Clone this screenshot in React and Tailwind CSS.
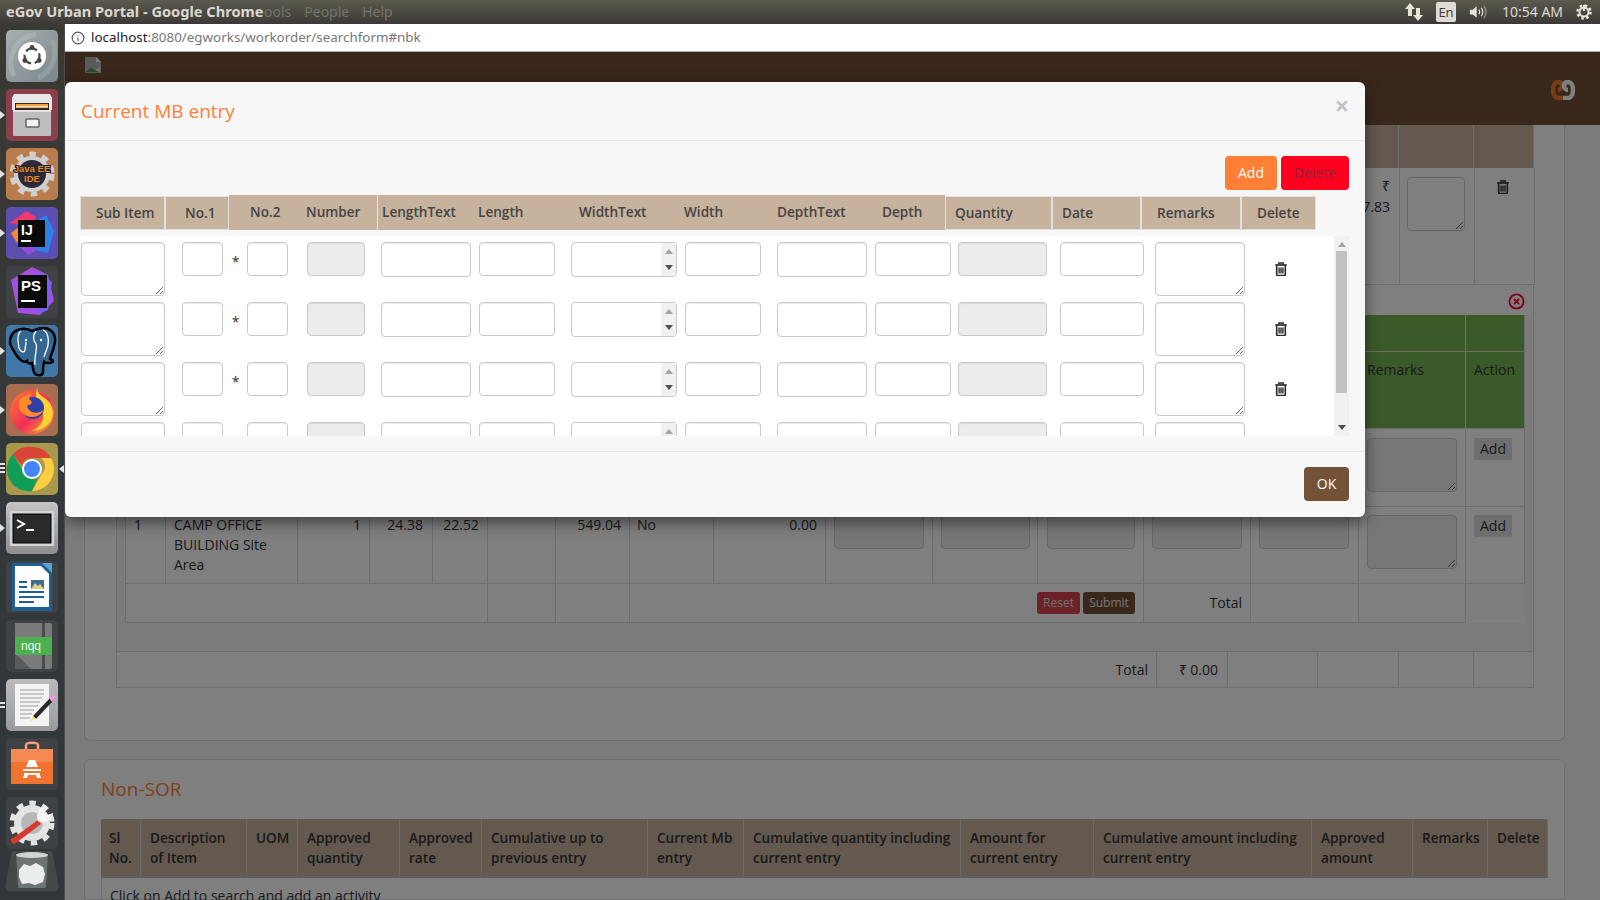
import React from "react";
import { Info, CircleX } from "lucide-react";

function Trash({ className = "" }) {
  return (
    <svg viewBox="0 0 12 14" className={"w-[12px] h-[14px] " + className} fill="none" stroke="currentColor">
      <path d="M0.300 3h11.400" strokeWidth="1.700" />
      <path d="M3.800 2.500V1h4.400v1.500" strokeWidth="1.400" />
      <path d="M1.700 3.500v9.200c0 .5.3.8.8.8h7c.5 0 .8-.3.8-.8V3.500" strokeWidth="1.600" />
      <path d="M4.100 5.500v6M6 5.500v6M7.900 5.500v6" strokeWidth="1.400" />
    </svg>
  );
}

function Tri({ dir = "up", dark }) {
  return (
    <svg viewBox="0 0 8 5" className="w-[8px] h-[5px]" fill={dark ? "#505050" : "#a3a3a3"}>
      {dir === "up" ? <path d="M4 0l4 5H0z" /> : <path d="M4 5L0 0h8z" />}
    </svg>
  );
}

const fieldCls = "block border border-[#c9c9c9] rounded-[4px] bg-white shadow-[inset_0_1px_1px_rgba(0,0,0,0.075)]";
const grayCls = "block border border-[#c9c9c9] rounded-[4px] bg-[#ececec] shadow-[inset_0_1px_1px_rgba(0,0,0,0.075)]";

function ModalRow({ star = true }) {
  return (
    <div className="flex items-start h-[60px] pt-[6px] shrink-0">
      <textarea className={fieldCls + " w-[84px] h-[54px]"} />
      <input className={fieldCls + " ml-[17px] w-[41px] h-[34px]"} />
      <span className="w-[24px] pt-[10px] pl-[1px] text-center text-[14px] leading-[20px] text-[#333]">{star ? "*" : ""}</span>
      <input className={fieldCls + " w-[41px] h-[34px]"} />
      <input disabled className={grayCls + " ml-[19px] w-[58px] h-[34px]"} />
      <input className={fieldCls + " ml-[16px] w-[90px] h-[35px]"} />
      <input className={fieldCls + " ml-[8px] w-[76px] h-[34px]"} />
      <div className="ml-[16px] w-[106px] h-[35px] flex border border-[#c9c9c9] rounded-[4px] overflow-hidden bg-white">
        <div className="flex-1" />
        <div className="w-[15px] bg-[#f0f0f0] flex flex-col items-center justify-between py-[6px]">
          <Tri dir="up" />
          <Tri dir="down" dark />
        </div>
      </div>
      <input className={fieldCls + " ml-[8px] w-[76px] h-[34px]"} />
      <input className={fieldCls + " ml-[16px] w-[90px] h-[35px]"} />
      <input className={fieldCls + " ml-[8px] w-[76px] h-[34px]"} />
      <input disabled className={grayCls + " ml-[7px] w-[89px] h-[34px]"} />
      <input className={fieldCls + " ml-[13px] w-[84px] h-[34px]"} />
      <textarea className={fieldCls + " ml-[11px] w-[90px] h-[54px]"} />
      <div className="ml-[30px] pt-[20px] text-[#2a2a2a]">
        <Trash />
      </div>
    </div>
  );
}

const boxed = "h-[34px] border border-[#e4e0dc]";
const flat = "h-[35px] -mt-[1px] pb-[1px]";
const headCells = [
  { t: "Sub Item", c: "w-[85px] pl-[15px] " + boxed },
  { t: "No.1", c: "w-[64px] pl-[19px] " + boxed },
  { t: "No.2", c: "w-[71px] pl-[21px] " + flat },
  { t: "Number", c: "w-[77px] pl-[6px] " + flat },
  { t: "LengthText", c: "w-[101px] pl-[4px] border-l border-[#e4e0dc] " + flat },
  { t: "Length", c: "w-[100px] pl-[0px] " + flat },
  { t: "WidthText", c: "w-[105px] pl-[1px] " + flat },
  { t: "Width", c: "w-[93px] pl-[1px] " + flat },
  { t: "DepthText", c: "w-[105px] pl-[1px] " + flat },
  { t: "Depth", c: "w-[64px] pl-[1px] " + flat },
  { t: "Quantity", c: "w-[107px] pl-[9px] " + boxed },
  { t: "Date", c: "w-[89px] pl-[9px] " + boxed },
  { t: "Remarks", c: "w-[100px] pl-[15px] " + boxed },
  { t: "Delete", c: "w-[75px] pl-[15px] " + boxed },
];

function Modal() {
  return (
    <div className="absolute left-0 top-[30px] w-[1300px] h-[435px] bg-[#f7f7f7] rounded-[6px] shadow-[0_5px_15px_rgba(0,0,0,0.5)] flex flex-col">
      <div className="h-[59px] shrink-0 border-b border-[#e5e5e5] px-[16px] flex items-start justify-between">
        <span className="text-[19px] leading-[26px] mt-[16px] text-[#ff7f37]">Current MB entry</span>
        <span className="text-[25px] leading-[25px] mt-[11px] font-bold text-[#c4c4c4]">×</span>
      </div>
      <div className="h-[311px] shrink-0 border-b border-[#e5e5e5] px-[16px] pt-[15px]">
        <div className="flex justify-end gap-[4px] h-[34px]">
          <button className="w-[52px] pb-[2px] rounded-[4px] bg-[#ff7f36] text-white text-[14px]">Add</button>
          <button className="w-[68px] pb-[2px] rounded-[4px] bg-[#ff001f] text-[#8f2238] text-[14px]">Delete</button>
        </div>
        <div className="flex h-[33px] mt-[6px] -ml-px">
          {headCells.map((h) => (
            <div key={h.t} className={"flex items-center bg-[#c7b29e] text-[13.6px] font-semibold text-[#444] " + h.c}>
              <span>{h.t}</span>
            </div>
          ))}
        </div>
        <div className="mt-[7px] h-[200px] bg-white flex overflow-hidden">
          <div className="flex-1 flex flex-col">
            <ModalRow />
            <ModalRow />
            <ModalRow />
            <ModalRow star={false} />
          </div>
          <div className="w-[15px] h-full bg-[#f1f1f1] flex flex-col items-center pt-[6px] pb-[6px]">
            <Tri dir="up" />
            <div className="w-[11px] h-[142px] mt-[4px] bg-[#c1c1c1]" />
            <div className="flex-1" />
            <Tri dir="down" dark />
          </div>
        </div>
      </div>
      <div className="flex-1 flex justify-end items-start px-[16px] pt-[15px]">
        <button className="w-[45px] h-[34px] pb-[2px] rounded-[4px] bg-[#745238] text-white text-[14px]">OK</button>
      </div>
    </div>
  );
}

const innerCols = "grid grid-cols-[41px_132px_72px_63px_55px_68px_74px_84px_112px_107px_105px_106px_107px_108px_107px_59px]";
const cell = "border-r border-b border-[#dadada] px-[8px] py-[8px] text-[14px] leading-[20px] text-[#333]";
const bgInput = "block w-[90px] h-[34px] border border-[#cfcfcf] rounded-[4px] bg-[#eeeeee]";
const bgArea = "block w-[90px] h-[54px] border border-[#cfcfcf] rounded-[4px] bg-[#eeeeee]";

function AddBtn() {
  return (
    <div className="w-[38px] h-[22px] bg-[#dddddd] text-[#333] text-[14px] leading-[22px] text-center">Add</div>
  );
}

function BackgroundPage() {
  const rows = [
    ["", "", "", "", "", "", "", ""],
    ["1", "CAMP OFFICE BUILDING Site Area", "1", "24.38", "22.52", "", "549.04", "No"],
  ];
  return (
    <div className="w-[1535px] text-[14px] text-[#333]">
      <div className="ml-[19px] w-[1481px] h-[616px] bg-white border-x border-b border-[#dddddd] rounded-b-[6px] pl-[31px]">
        <div className="w-[1418px]">
          <div className="grid grid-cols-[1283px_75px_60px] h-[43px] bg-[#c7b29e]">
            <div className="border-r border-[#dadada]" />
            <div className="border-r border-[#dadada]" />
            <div className="border-r border-[#dadada]" />
          </div>
          <div className="grid grid-cols-[1283px_75px_60px] h-[117px] border-l border-[#dadada]">
            <div className="border-r border-b border-[#dadada] pt-[8px] pr-[9px] text-right leading-[20px]">
              <div>₹</div>
              <div className="pt-[1px]">7.83</div>
            </div>
            <div className="border-r border-b border-[#dadada] pl-[7px] pt-[9px]">
              <textarea className="block w-[58px] h-[54px] border border-[#cfcfcf] rounded-[4px] bg-white" />
            </div>
            <div className="border-r border-b border-[#dadada] pt-[12px] pr-[3px] flex justify-center items-start text-[#333]">
              <Trash />
            </div>
          </div>
          <div className="h-[367px] bg-[#f6f6f6] border-x border-b border-[#dadada] pl-[8px]">
            <div className="h-[30px] pt-[2px] bg-white -ml-[8px] pr-[8px] flex justify-end items-center">
              <CircleX size={17} strokeWidth={2.6} className="text-[#ff0033]" />
            </div>
            <div className="bg-white w-[1400px] h-[307px]">
              <div className={innerCols + " h-[37px] bg-[#76b454]"}>
                {Array.from({ length: 16 }).map((_, i) => (
                  <div key={i} className="border-r border-b border-[#dadada]" />
                ))}
              </div>
              <div className={innerCols + " h-[77px] bg-[#76b454]"}>
                {Array.from({ length: 14 }).map((_, i) => (
                  <div key={i} className={cell} />
                ))}
                <div className={cell}>Remarks</div>
                <div className={cell}>Action</div>
              </div>
              {rows.map((r, i) => (
                <div key={i} className={innerCols + (i === 0 ? " h-[78px]" : " h-[77px]")}>
                  <div className={cell + " border-l"}>{r[0]}</div>
                  <div className={cell}>{r[1]}</div>
                  <div className={cell + " text-right"}>{r[2]}</div>
                  <div className={cell + " text-right !pr-[9px]"}>{r[3]}</div>
                  <div className={cell + " text-right"}>{r[4]}</div>
                  <div className={cell}>{r[5]}</div>
                  <div className={cell + " text-right"}>{r[6]}</div>
                  <div className={cell + " !pl-[7px]"}>{r[7]}</div>
                  <div className={cell + " text-right"}>{i === 1 ? "0.00" : ""}</div>
                  <div className={cell}><div className={bgInput} /></div>
                  <div className={cell}><div className={bgInput + " !w-[89px]"} /></div>
                  <div className={cell + " !pl-[9px]"}><div className={bgInput + " !w-[88px]"} /></div>
                  <div className={cell}><div className={bgInput} /></div>
                  <div className={cell}><div className={bgInput} /></div>
                  <div className={cell + (i === 0 ? " !pt-[9px]" : "")}><textarea className={bgArea} /></div>
                  <div className={cell + " !pr-0" + (i === 0 ? " !pt-[9px]" : "")}><AddBtn /></div>
                </div>
              ))}
              <div className={innerCols + " h-[39px]"}>
                <div className="col-span-5 border-l border-r border-b border-[#dadada]" />
                <div className="border-r border-b border-[#dadada]" />
                <div className="border-r border-b border-[#dadada]" />
                <div className="col-span-5 border-r border-b border-[#dadada] flex justify-end items-center gap-[3px] pr-[8px]">
                  <div className="w-[43px] h-[22px] rounded-[3px] bg-[#d9434f] text-[#e0e0e0] text-[12px] leading-[22px] text-center">Reset</div>
                  <div className="w-[52px] h-[22px] rounded-[3px] bg-[#744e36] text-[#e8e8e8] text-[12px] leading-[22px] text-center">Submit</div>
                </div>
                <div className="border-r border-b border-[#dadada] flex items-center justify-end pr-[8px] pb-[2px]">Total</div>
                <div className="border-r border-b border-[#dadada]" />
                <div className="border-r border-b border-[#dadada]" />
                <div className="bg-[#fdfdfd]" />
              </div>
            </div>
          </div>
          <div className="grid grid-cols-[1040px_71px_90px_81px_75px_60px] h-[36px] border-l border-[#dadada]">
            <div className="border-r border-b border-[#dadada] flex items-center justify-end pr-[8px]">Total</div>
            <div className="border-r border-b border-[#dadada] flex items-center justify-end pr-[9px]">₹ 0.00</div>
            <div className="border-r border-b border-[#dadada]" />
            <div className="border-r border-b border-[#dadada]" />
            <div className="border-r border-b border-[#dadada]" />
            <div className="border-r border-b border-[#dadada]" />
          </div>
        </div>
      </div>
      <div className="mt-[18px] ml-[19px] w-[1481px] h-[141px] bg-white border border-[#dddddd] rounded-t-[6px] pl-[16px]">
        <div className="pt-[16px] text-[19px] leading-[26px] text-[#ff7f37]">Non-SOR</div>
        <div className="mt-[17px] grid grid-cols-[40px_106px_51px_102px_82px_166px_96px_217px_133px_218px_101px_75px_60px] w-[1447px] h-[59px] bg-[#c7b29e] border-b-[2px] border-[#bdbdbd] text-[13.6px] font-semibold text-[#333] leading-[20px]">
          {[
            ["Sl", "No."],
            ["Description", "of Item"],
            ["UOM"],
            ["Approved", "quantity"],
            ["Approved", "rate"],
            ["Cumulative up to", "previous entry"],
            ["Current Mb", "entry"],
            ["Cumulative quantity including", "current entry"],
            ["Amount for", "current entry"],
            ["Cumulative amount including", "current entry"],
            ["Approved", "amount"],
            ["Remarks"],
            ["Delete"],
          ].map((t, i) => (
            <div key={i} className={"border-r border-[#d8d0c8] pr-[2px] pt-[9px] " + (i === 0 ? "pl-[8px]" : "pl-[9px]")}>
              {t.map((l) => (
                <div key={l} className="whitespace-nowrap">{l}</div>
              ))}
            </div>
          ))}
        </div>
        <div className="pl-[8px] pt-[8px] leading-[20px] border-l border-[#dadada] w-[1447px]">Click on Add to search and add an activity</div>
      </div>
    </div>
  );
}

/* ---------- dock ---------- */

function Gear({ cx = 26, cy = 26, r = 17, fill = "#d8d8d8" }) {
  return (
    <g>
      <circle cx={cx} cy={cy} r={r} fill={fill} />
      <circle cx={cx} cy={cy} r={r + 2} fill="none" stroke={fill} strokeWidth="5" strokeDasharray="6.500 6.500" />
    </g>
  );
}

const I = {
  ubuntu: (
    <svg viewBox="0 0 52 52" className="w-full h-full">
      <path d="M8 46C0 30 8 8 30 4" stroke="#b5bebe" strokeWidth="5" fill="none" opacity=".5" />
      <path d="M46 10c6 14 2 30-14 38" stroke="#a5aeae" strokeWidth="5" fill="none" opacity=".5" />
      <circle cx="26" cy="26" r="14" fill="#fff" />
      <circle cx="26" cy="26" r="7.500" fill="none" stroke="#444" strokeWidth="2.200" strokeDasharray="12 3.700" strokeDashoffset="3" />
      <circle cx="26" cy="17.500" r="2.400" fill="#444" />
      <circle cx="18.800" cy="30.500" r="2.400" fill="#444" />
      <circle cx="33.200" cy="30.500" r="2.400" fill="#444" />
    </svg>
  ),
  files: (
    <svg viewBox="0 0 52 52" className="w-full h-full">
      <path d="M8 5h36l2 4v12H6V9z" fill="#e8e8e8" />
      <rect x="9" y="14" width="34" height="8" fill="#3a2a22" />
      <rect x="10" y="15" width="32" height="4" fill="#f2a04a" />
      <rect x="10" y="17" width="32" height="1.200" fill="#ffe9c8" />
      <path d="M7 21h38v25a1 1 0 0 1-1 1H8a1 1 0 0 1-1-1z" fill="#bdbdbd" />
      <rect x="7" y="21" width="38" height="2" fill="#e4e4e4" />
      <rect x="20" y="30" width="13" height="8" rx="1" fill="#f2f2f2" stroke="#666" strokeWidth="1.500" />
    </svg>
  ),
  eclipse: (
    <svg viewBox="0 0 52 52" className="w-full h-full">
      <Gear r={18} fill="#cfcfcf" />
      <circle cx="26" cy="26" r="14" fill="#2f2a3a" />
      <g fontSize="9.500" fontWeight="700" textAnchor="middle" fill="#e08a1e" stroke="#2a2030" strokeWidth="2" paintOrder="stroke" fontFamily="Liberation Sans, sans-serif">
        <text x="26" y="24">Java EE</text>
        <text x="26" y="34">IDE</text>
      </g>
    </svg>
  ),
  ij: (
    <svg viewBox="0 0 52 52" className="w-full h-full">
      <path d="M4 16L20 4l10 6-6 10z" fill="#f0386b" />
      <path d="M5 26l8-6 4 14-6 2z" fill="#fb8a2d" />
      <path d="M30 14l10-6 8 16-6 22-18-4z" fill="#2f7fe8" />
      <path d="M8 34l14 14 10-6z" fill="#8f4fd8" />
      <rect x="12" y="13" width="27" height="27" fill="#0a0a0a" />
      <text x="15" y="28" fontSize="14" fontWeight="700" fill="#fff" fontFamily="Liberation Sans, sans-serif">IJ</text>
      <rect x="15" y="33" width="10" height="2" fill="#fff" />
    </svg>
  ),
  ps: (
    <svg viewBox="0 0 52 52" className="w-full h-full">
      <path d="M5 14L26 1l16 8 6 26-14 14-22-2z" fill="#a54fe0" />
      <path d="M34 6l12 10-4 28-10 4z" fill="#7a5cf0" />
      <rect x="12" y="9" width="29" height="33" fill="#0a0a0a" />
      <text x="15" y="25" fontSize="15" fontWeight="700" fill="#fff" fontFamily="Liberation Sans, sans-serif">PS</text>
      <rect x="15" y="34" width="14" height="2" fill="#fff" />
    </svg>
  ),
  pg: (
    <svg viewBox="0 0 52 52" className="w-full h-full">
      <path d="M4 17C4 7 12 3 20 4c3 0 5 2 6 2 3-1 6-3 11-3 8 0 13 6 12 14-1 7-3 11-5 16-1 2 3 1 3 3s-7 3-9 1c-1 4-1 8-1 10 0 4-5 4-8 2-2-2-2-8-3-11-3 1-5 0-5-2-4 3-9-3-12-8-2-4-5-7-5-11z" fill="#336791" stroke="#000" strokeWidth="2.500" />
      <path d="M15 6c-5 3-3 12-2 17 1 3 5 6 6 2 0-4 1-4 1-8M30 6c-3 4-3 9 0 13 2 3-2 12-1 21M37 5c5 2 6 9 5 15-1 5-3 8-4 12" fill="none" stroke="#fff" strokeWidth="1.300" />
      <circle cx="20" cy="15" r="1.200" fill="#fff" />
      <circle cx="35" cy="15" r="1.200" fill="#fff" />
    </svg>
  ),
  firefox: (
    <svg viewBox="0 0 52 52" className="w-full h-full">
      <defs>
        <linearGradient id="ffx" x1="0" y1="0" x2="1" y2="1">
          <stop offset="0" stopColor="#ff7a2a" />
          <stop offset=".55" stopColor="#f0305a" />
          <stop offset="1" stopColor="#ffb52b" />
        </linearGradient>
      </defs>
      <circle cx="26" cy="28" r="22" fill="url(#ffx)" />
      <path d="M32 3c-2 6 2 8 8 12 8 6 9 18 3 24-4 5-10 8-17 8 8-4 12-10 11-17-1-9-8-13-7-20 0-3 1-5 2-7z" fill="#ffd234" />
      <circle cx="27" cy="24" r="11" fill="#2f3fa8" />
      <path d="M14 16c3-4 8-6 12-6-2 3-4 4-2 6 3 2 2 5-2 5-2 1 0 5 4 7 4 2 10 0 12-3-2 6-10 10-17 7-7-3-10-10-7-16z" fill="#ff8b2a" />
    </svg>
  ),
  chrome: (
    <svg viewBox="0 0 52 52" className="w-full h-full">
      <path d="M26 4a22 22 0 0 1 19 11H26a11 11 0 0 0-10.500 7.500L7 11A22 22 0 0 1 26 4z" fill="#db4437" />
      <path d="M45 15a22 22 0 0 1-19 33l9.500-16.500A11 11 0 0 0 35 15z" fill="#ffcd40" />
      <path d="M7 11l9.500 16.500A11 11 0 0 0 31.500 35.500L26 48A22 22 0 0 1 7 11z" fill="#0f9d58" />
      <circle cx="26" cy="26" r="10" fill="#fff" />
      <circle cx="26" cy="26" r="8" fill="#4285f4" />
    </svg>
  ),
  terminal: (
    <svg viewBox="0 0 52 52" className="w-full h-full">
      <rect x="4" y="9" width="44" height="35" fill="#d5d5d5" />
      <rect x="7" y="12" width="38" height="29" fill="#2a2a2a" stroke="#000" strokeWidth="1" />
      <path d="M11 18l7 4-7 4" fill="none" stroke="#fff" strokeWidth="2" />
      <rect x="20" y="27" width="8" height="2" fill="#fff" />
    </svg>
  ),
  writer: (
    <svg viewBox="0 0 52 52" className="w-full h-full">
      <path d="M6 2h40v46a2 2 0 0 1-2 2H8a2 2 0 0 1-2-2z" fill="#1f5f94" />
      <path d="M36 2h10v10z" fill="#5aa0d0" />
      <path d="M9 5h26l8 8v33H9z" fill="#fff" />
      <rect x="25" y="19" width="13" height="9" fill="#3a6e94" />
      <path d="M25 28l4-6 3 3 2-2 4 5z" fill="#e8d080" />
      <path d="M13 20h8v2h-8zM13 25h8v2h-8zM13 30h25v2H13zM13 35h25v2H13zM13 40h15v2H13z" fill="#1f5f94" />
    </svg>
  ),
  nqq: (
    <svg viewBox="0 0 52 52" className="w-full h-full">
      <path d="M9 3h35a2 2 0 0 1 2 2v42a2 2 0 0 1-2 2H9z" fill="#7a7a7a" />
      <rect x="36" y="3" width="3" height="46" fill="#4a4a4a" />
      <path d="M9 33l16 16H9z" fill="#5a5a5a" />
      <rect x="9" y="17" width="37" height="18" fill="#4caf50" />
      <text x="15" y="30" fontSize="12" fill="#e8f5e8" fontFamily="Liberation Sans, sans-serif">nqq</text>
    </svg>
  ),
  editor: (
    <svg viewBox="0 0 52 52" className="w-full h-full">
      <rect x="9" y="5" width="34" height="42" fill="#f4f4f4" />
      <path d="M14 11h24M14 15h24M14 19h22M14 23h20M14 27h18M14 31h14M14 35h12M14 39h10" stroke="#9a9a9a" strokeWidth="1" />
      <path d="M27 37l17-18 3 3-17 18z" fill="#2a2a2a" />
      <path d="M43 19l3-3c2-1 4 2 3 4l-3 3z" fill="#e89adf" />
      <path d="M27 37l3 3-6 2z" fill="#f0e080" />
    </svg>
  ),
  software: (
    <svg viewBox="0 0 52 52" className="w-full h-full">
      <path d="M20 12V7c0-3 12-3 12 0v5" fill="none" stroke="#f4a078" strokeWidth="2.500" />
      <path d="M5 11h42v35H5z" fill="#f0732f" />
      <path d="M5 11h42v13H5z" fill="#f58a52" />
      <path d="M23 22h6l3 7h-12z" fill="#fff" />
      <path d="M17 31h18v2H17zM18 35h16v2H18z" fill="#fff" />
      <path d="M18 37h4l-1 3h-4zM30 37h4l1 3h-4z" fill="#fff" />
    </svg>
  ),
  settings: (
    <svg viewBox="0 0 52 52" className="w-full h-full">
      <Gear r={18} fill="#e4e4e4" />
      <circle cx="26" cy="26" r="11" fill="#b8b8b8" />
      <path d="M7 41l25-18 3 4-25 19a3 3 0 0 1-4-5z" fill="#d63a2f" />
      <path d="M32 24c-3-7 1-14 9-15l-3 6 3 3 6-2c0 7-8 12-15 8z" fill="#f4f4f4" />
    </svg>
  ),
  trash: (
    <svg viewBox="0 0 54 42" className="w-full h-full">
      <path d="M7 1h40l7 36-2 4H2l-2-4z" fill="#434849" />
      <path d="M11 4h32l-2 32a2 2 0 0 1-2 2H15a2 2 0 0 1-2-2z" fill="#6e7374" />
      <ellipse cx="27" cy="5" rx="16" ry="3" fill="#cfd3d3" />
      <path d="M14 20l5-6 6 2 6-3 7 4 2 7-2 8-8 3-6-2-7 1-3-7z" fill="#eceeee" />
    </svg>
  ),
};

function Tri2({ right }) {
  return (
    <svg viewBox="0 0 5 8" className="w-[5px] h-[8px]" fill="#e2e2e2">
      {right ? <path d="M5 0v8L0 4z" /> : <path d="M0 0v8l5-4z" />}
    </svg>
  );
}

function Tile({ bg, icon, pip }) {
  return (
    <div className={"relative w-[52px] h-[52px] shrink-0 rounded-[5px] " + bg}>
      {icon}
      {pip === "tri" && (
        <span className="absolute left-[-6px] top-[22px]"><Tri2 /></span>
      )}
      {pip === "dots3" && (
        <>
          <span className="absolute left-[-6px] top-[20px] flex flex-col gap-[2px]">
            <i className="block w-[5px] h-[2px] bg-[#e2e2e2]" />
            <i className="block w-[5px] h-[2px] bg-[#e2e2e2]" />
            <i className="block w-[5px] h-[2px] bg-[#e2e2e2]" />
          </span>
          <span className="absolute right-[-6px] top-[22px]"><Tri2 right /></span>
        </>
      )}
      {pip === "dots2" && (
        <span className="absolute left-[-6px] top-[23px] flex flex-col gap-[2px]">
          <i className="block w-[5px] h-[2px] bg-[#e2e2e2]" />
          <i className="block w-[5px] h-[2px] bg-[#e2e2e2]" />
        </span>
      )}
    </div>
  );
}

function Dock() {
  return (
    <div className="w-[65px] shrink-0 bg-gradient-to-b from-[#3a3933] via-[#33383a] to-[#31363a] pt-[6px] pl-[6px] flex flex-col gap-[7px] border-r border-[#4a4d4d]">
      <Tile bg="bg-gradient-to-br from-[#a7b0b0] to-[#79878a]" icon={I.ubuntu} />
      <Tile bg="bg-[#8b3f4b]" icon={I.files} pip="tri" />
      <Tile bg="bg-[#b87c4d]" icon={I.eclipse} pip="tri" />
      <Tile bg="bg-[#5b4fb2]" icon={I.ij} pip="tri" />
      <Tile bg="bg-[#3e4244]" icon={I.ps} />
      <Tile bg="bg-[#3f78a8]" icon={I.pg} pip="tri" />
      <Tile bg="bg-[#a86c50]" icon={I.firefox} pip="tri" />
      <Tile bg="bg-[#a8994d]" icon={I.chrome} pip="dots3" />
      <Tile bg="bg-gradient-to-b from-[#c4c4c4] to-[#8f8f8f]" icon={I.terminal} pip="tri" />
      <Tile bg="bg-[#3e4244]" icon={I.writer} />
      <Tile bg="bg-[#3e4244]" icon={I.nqq} />
      <Tile bg="bg-gradient-to-b from-[#bcbcbc] to-[#9a9a9a]" icon={I.editor} pip="dots2" />
      <Tile bg="bg-[#3e4244]" icon={I.software} />
      <Tile bg="bg-[#3e4244]" icon={I.settings} />
      <div className="-mt-[6px] -ml-[1px] w-[54px] h-[42px] shrink-0">{I.trash}</div>
    </div>
  );
}

function TopBar() {
  return (
    <div className="h-[24px] shrink-0 bg-gradient-to-b from-[#5c5a4e] to-[#3c3b37] flex items-center justify-between border-b border-[#3a3935] text-[14px]">
      <div className="flex items-center pl-[6px] font-['Noto_Sans',sans-serif]">
        <span className="font-bold text-[14.6px] text-[#dcd8cf] w-[258px] whitespace-nowrap">eGov Urban Portal - Google Chrome</span>
        <span className="text-[#75736a]">ools</span>
        <span className="text-[#75736a] ml-[13px]">People</span>
        <span className="text-[#75736a] ml-[13px]">Help</span>
      </div>
      <div className="flex items-center pr-[8px] text-[#dfdbd2]">
        <svg viewBox="0 0 18 18" className="w-[18px] h-[18px]" fill="#e8e4da">
          <path d="M5 0l5 6H7v7H3V6H0z" />
          <path d="M13 18l-5-6h3V5h4v7h3z" />
        </svg>
        <div className="ml-[13px] w-[20px] h-[20px] rounded-[2px] bg-[#e0dcd4] text-[#3c3b37] text-[13px] leading-[20px] text-center">En</div>
        <svg viewBox="0 0 20 18" className="ml-[13px] w-[19px] h-[18px]" fill="none" stroke="#e8e4da">
          <path d="M1 6.500h3L8 3v12l-4-3.500H1z" fill="#e8e4da" stroke="none" />
          <path d="M10.500 6.500c1 1.500 1 3.500 0 5" strokeWidth="1.300" />
          <path d="M13 4.500c2 3 2 6 0 9" strokeWidth="1.300" />
          <path d="M15.500 2.500c3 4 3 9 0 13" strokeWidth="1.300" opacity=".5" />
        </svg>
        <span className="ml-[14px] w-[61px] whitespace-nowrap font-['Noto_Sans',sans-serif]">10:54 AM</span>
        <svg viewBox="0 0 16 18" className="ml-[13px] w-[16px] h-[18px]" fill="none" stroke="#e8e4da">
          <circle cx="8" cy="9" r="4.500" strokeWidth="2" />
          <circle cx="8" cy="9" r="6.500" strokeWidth="2.500" strokeDasharray="2.500 2.600" />
          <path d="M8 2v6" strokeWidth="2" />
        </svg>
      </div>
    </div>
  );
}

export default function App() {
  return (
    <div className="w-[1600px] h-[900px] overflow-hidden flex flex-col font-['Open_Sans',sans-serif]">
      <TopBar />
      <div className="flex flex-1 min-h-0">
        <Dock />
        <div className="flex-1 flex flex-col min-w-0">
          <div className="h-[28px] shrink-0 bg-white border-b border-[#b0b0b0] flex items-center pl-[6px] text-[13.4px] font-['Noto_Sans',sans-serif]">
            <Info size={14} className="text-[#555]" />
            <span className="ml-[6px] text-[#222]">localhost</span>
            <span className="text-[#777]">:8080/egworks/workorder/searchform#nbk</span>
          </div>
          <div className="relative flex-1 overflow-hidden bg-[#f6f6f6]">
            <div className="h-[73px] bg-[#744e36] flex items-center justify-between pl-[20px] pr-[25px]">
              <svg viewBox="0 0 16 16" className="w-[16px] h-[16px] self-start mt-[5px]">
                <path d="M0 0h11l5 5v11H0z" fill="#b4b4b4" />
                <path d="M11 0l5 5h-5z" fill="#ffffff" />
                <path d="M1 15l5-4 4 2 5 2z" fill="#4a9a3a" />
                <path d="M10 13l5-3v5z" fill="#ffffff" opacity=".7" />
              </svg>
              <svg viewBox="0 0 24 20" className="w-[24px] h-[20px] mt-[3px]" fill="none" strokeWidth="4.500">
                <path d="M12 18H7c-3 0-5-3-5-8s2-8 5-8 4 2 4 4-2 4-4 4" stroke="#f07a2a" />
                <path d="M12 18h5c3 0 5-3 5-8s-2-8-5-8-4 2-4 4 2 4 4 4" stroke="#ffffff" />
              </svg>
            </div>
            <BackgroundPage />
            <div className="absolute inset-0 bg-black/50" />
            <Modal />
          </div>
        </div>
      </div>
    </div>
  );
}
